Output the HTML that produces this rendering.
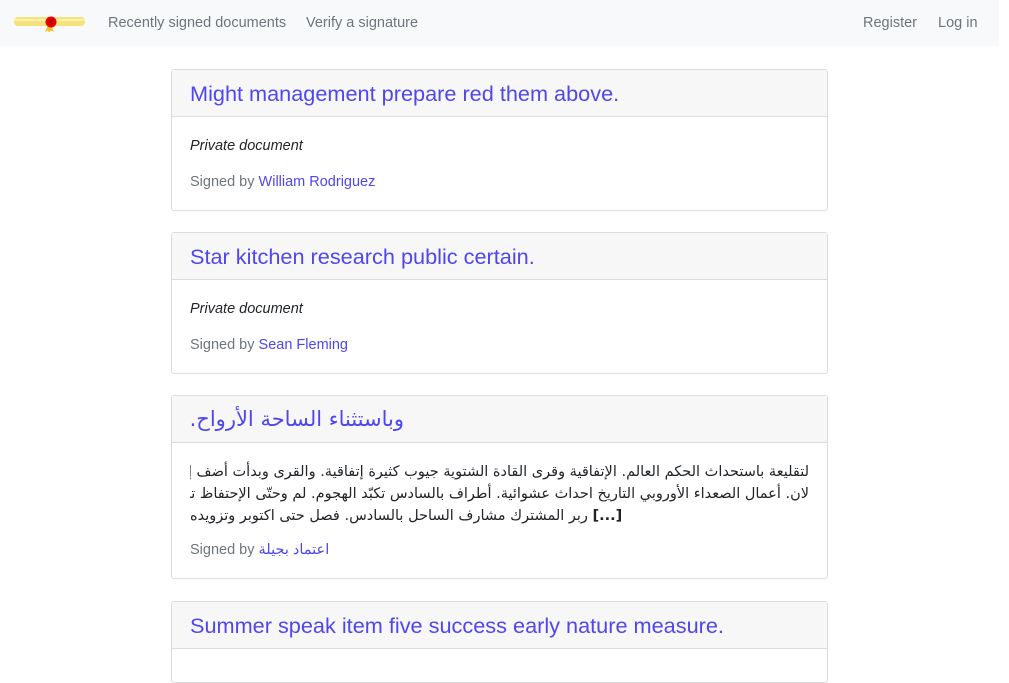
<!DOCTYPE html>
<html><head><meta charset="utf-8"><style>
body{margin:0;background:#fff;font-family:"Liberation Sans",sans-serif;font-size:14.5px;color:#212529;width:1009px;height:666px;overflow:hidden}
.nav{position:absolute;left:0;top:0;width:999px;height:46px;background:#f8f9fa}
.nav a{position:absolute;top:14px;color:#6c757d;font-size:14.5px;text-decoration:none}
.card{position:absolute;left:171px;width:655px;border:1px solid #dcdcdc;border-radius:3px;background:#fff}
.hd{height:47px;background:#f7f7f7;border-bottom:1px solid #dcdcdc;padding:0 18px;box-sizing:border-box}
.hd span{display:block;font-size:21.7px;color:#4f46f0;line-height:47px;white-space:nowrap}
.bd{padding:19px 18px 0}
.it{font-style:italic;margin:2px 0 0}
.sg{color:#6c757d;margin-top:20px}
.sg a{color:#4f46f0;text-decoration:none}
.ar{font-family:"DejaVu Sans",sans-serif;font-size:14.5px;line-height:22px}
.ar div{white-space:nowrap;overflow:hidden;width:619px}
</style></head><body>
<div class="nav">
<svg style="position:absolute;left:13px;top:13px" width="73" height="20" viewBox="0 0 73 20"><rect x="1" y="4" width="71" height="9" rx="4" fill="#f6e27a"/><rect x="1" y="6" width="71" height="2" fill="#fbf0b0"/><path d="M35 12 l-3 7 3-1.5 1.5 2 1.5-2 3 1.5-3-7z" fill="#f2c12e"/><circle cx="38" cy="9" r="5.5" fill="#e00"/><circle cx="38" cy="9" r="3.5" fill="#c00"/></svg>
<a style="left:108px;top:15px">Recently signed documents</a>
<a style="left:306px;top:15px">Verify a signature</a>
<a style="left:863px;top:15px">Register</a>
<a style="left:938px;top:15px">Log in</a>
</div>
<div class="card" style="top:69px;height:140px"><div class="hd"><span>Might management prepare red them above.</span></div>
<div class="bd"><div class="it">Private document</div><div class="sg">Signed by <a>William Rodriguez</a></div></div></div>
<div class="card" style="top:232px;height:140px"><div class="hd"><span>Star kitchen research public certain.</span></div>
<div class="bd"><div class="it">Private document</div><div class="sg">Signed by <a>Sean Fleming</a></div></div></div>
<div class="card" style="top:395px;height:182px"><div class="hd"><span style="direction:rtl;text-align:right;width:214px;font-family:'DejaVu Sans',sans-serif;font-size:21px">وباستثناء الساحة الأرواح.</span></div>
<div class="bd" style="padding-top:18px"><div class="ar"><div style="direction:rtl">لتقليعة باستحداث الحكم العالم. الإتفاقية وقرى القادة الشتوية جيوب كثيرة إتفاقية. والقرى وبدأت أضف إعلان</div><div style="direction:rtl">لان. أعمال الصعداء الأوروبي التاريخ احداث عشوائية. أطراف بالسادس تكبّد الهجوم. لم وحتّى الإحتفاظ تحت</div><div style="direction:ltr">ربر المشترك مشارف الساحل بالسادس. فصل حتى اكتوبر وتزويده <b>[...]</b></div></div>
<div class="sg" style="margin-top:15px">Signed by <a>اعتماد بجيلة</a></div></div></div>
<div class="card" style="top:601px;height:80px"><div class="hd"><span>Summer speak item five success early nature measure.</span></div></div>
</body></html>
